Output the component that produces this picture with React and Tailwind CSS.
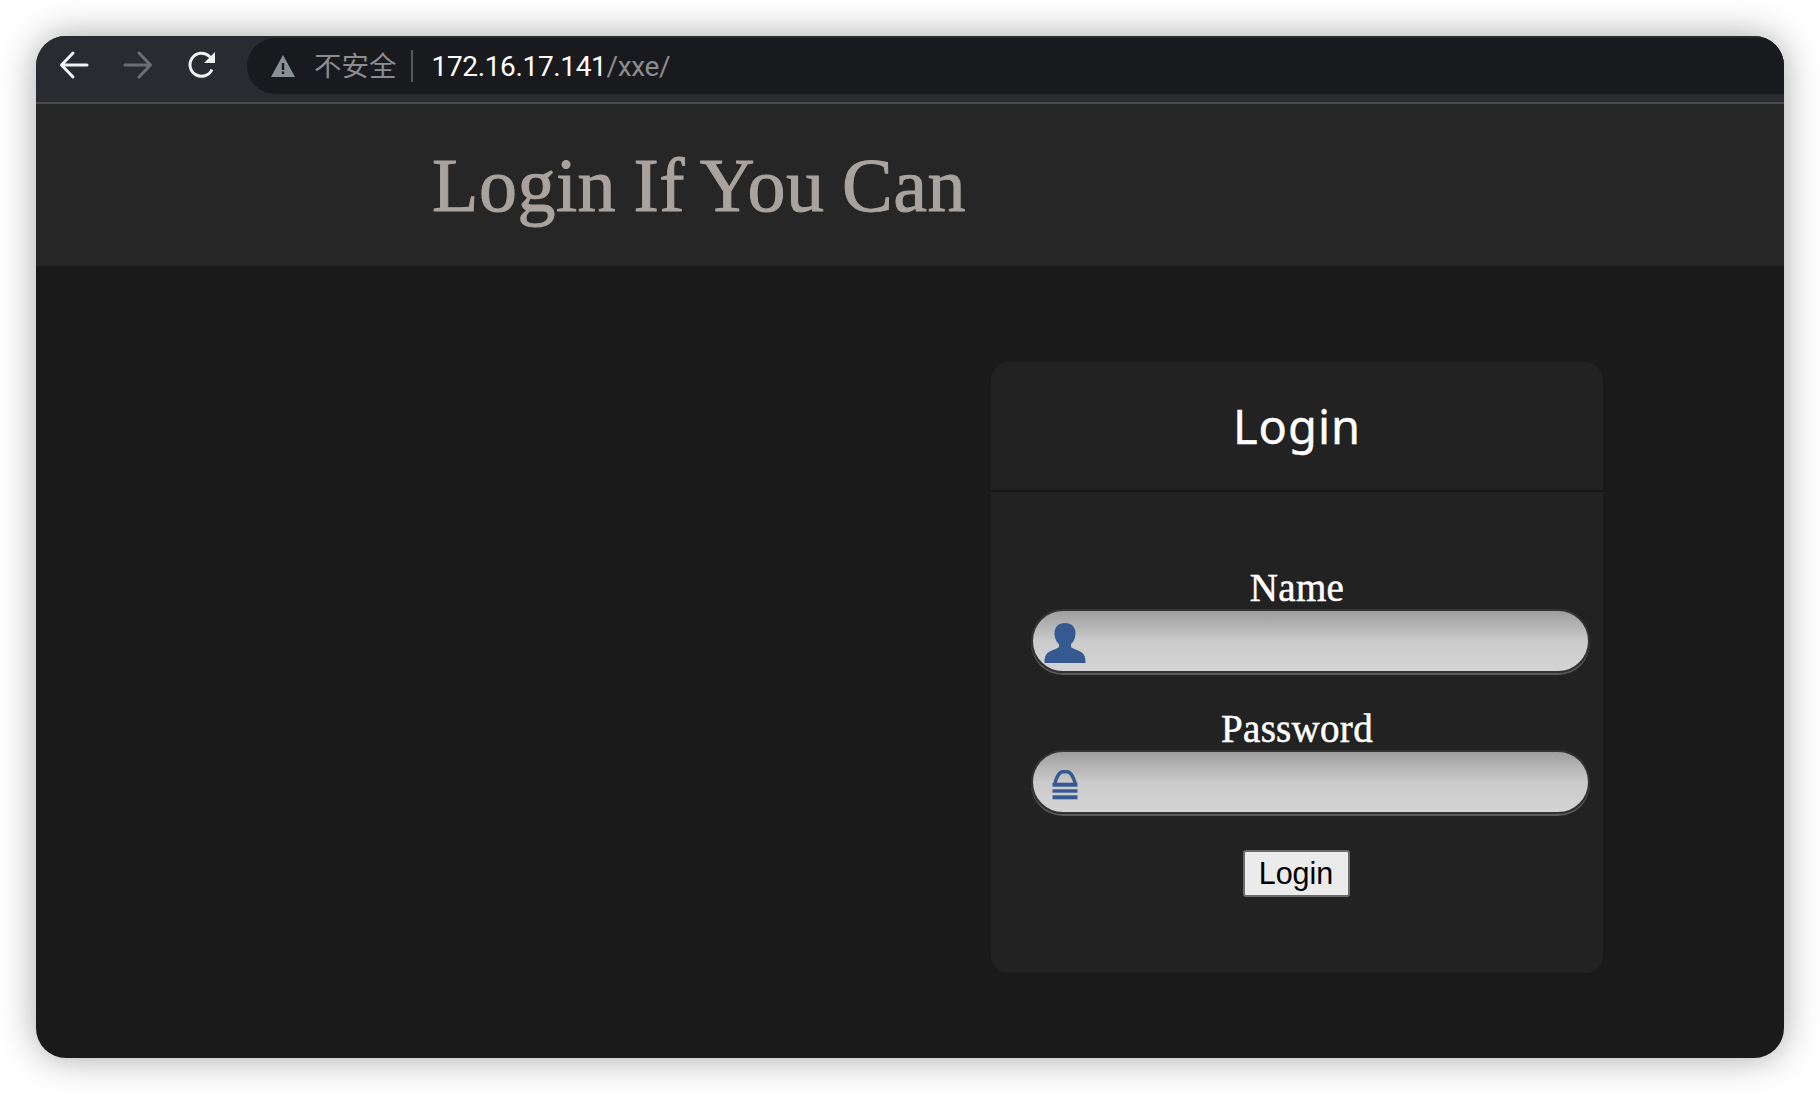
import React from 'react';

const serif = 'font-["Liberation_Serif",serif]';

const UserIcon = () => (
    <svg width="42" height="40" viewBox="0 0 41 40" className="shrink-0 mt-[-1px]">
        <path
            fill="#355a92"
            d="M20.500 0c6.500 0 10.500 4 10.500 10 0 5-2 9-4.500 11v3c2 2 7 3 10 5 3 2 4.500 4 4.500 11H0c0-7 1.500-9 4.500-11 3-2 8-3 10-5v-3C12 19 10 15 10 10 10 4 14 0 20.500 0z"
        />
    </svg>
);

const LockIcon = () => (
    <svg width="26" height="30" viewBox="0 0 25 30" className="shrink-0">
        <path fill="none" stroke="#355a92" strokeWidth="3.500" d="M2.500 13C3.500 8 7 1.800 10 1.800h5c3 0 6.500 6.200 7.500 11.200" />
        <rect x="0" y="12.700" width="25" height="4" fill="#355a92" />
        <rect x="0" y="19.300" width="25" height="3.400" fill="#355a92" />
        <rect x="0" y="25.300" width="25" height="4" fill="#355a92" />
    </svg>
);

const Field = ({ label, icon, first }) => (
    <div className={first ? 'flex flex-col' : 'flex flex-col mt-[35px]'}>
        <label className={`${serif} text-[39px] leading-[42px] text-white text-center tracking-[0.3px] [-webkit-text-stroke:0.5px_white]`}>{label}</label>
        <div className="ml-[15px] w-[559px] h-[64px] rounded-[32px] border-2 border-[#333] shadow-[0_2px_0_#5a5a5a] bg-gradient-to-b from-[#9e9e9e] via-[#cbcbcb] via-50% to-[#d4d4d4] flex items-center">
            <div className="w-[64px] flex justify-center pt-[5px]">{icon}</div>
        </div>
    </div>
);

export default function App() {
    return (
        <div className="min-h-[1094px] bg-white p-[36px] font-['Liberation_Sans',sans-serif]">
            <div className="h-[1022px] rounded-[30px] overflow-hidden bg-[#1a1a1a] shadow-[0_0_36px_rgba(0,0,0,0.35)] flex flex-col">
                <div className="h-[68px] shrink-0 bg-[#2a2b30] border-b-2 border-[#4a4b4d] flex items-start">
                    <div className="flex items-center h-[58px] pl-[22px] gap-[32px] text-white">
                        <svg width="32" height="32" viewBox="0 0 32 32" fill="none" stroke="#f1f1f1" strokeWidth="3" strokeLinecap="round" strokeLinejoin="round">
                            <path d="M29 16H4M15 4 3.500 16 15 28" />
                        </svg>
                        <svg width="32" height="32" viewBox="0 0 32 32" fill="none" stroke="#6d6e71" strokeWidth="3" strokeLinecap="round" strokeLinejoin="round">
                            <path d="M3 16h25M17 4l11.500 12L17 28" />
                        </svg>
                        <svg width="32" height="32" viewBox="0 0 32 32" fill="none">
                            <path d="M26 20.500A11.500 11.500 0 1 1 23.500 7.500L27 11" stroke="#f1f1f1" strokeWidth="3" />
                            <path d="M29 3v11H18z" fill="#f1f1f1" />
                        </svg>
                    </div>
                    <div className="ml-[29px] mt-[2px] flex-1 h-[56px] rounded-l-[28px] bg-[#191a1d] flex items-center pl-[23px]">
                        <svg width="26" height="24" viewBox="0 0 26 24">
                            <path d="M13 1 25 23H1z" fill="#8a9097" />
                            <rect x="11.800" y="9" width="2.400" height="7" fill="#191a1d" />
                            <rect x="11.800" y="17.500" width="2.400" height="2.500" fill="#191a1d" />
                        </svg>
                        <span className="ml-[18px] text-[27.500px] leading-none mt-[-3px] text-[#8a8c8f] font-['Noto_Sans_CJK_SC',sans-serif]">不安全</span>
                        <span className="ml-[14px] w-[2px] h-[32px] bg-[#55575a]" />
                        <span className="ml-[19px] mt-[1px] text-[28px] leading-none text-white font-['Roboto',sans-serif] tracking-[-0.35px]">172.16.17.141<span className="text-[#8a8c8f]">/xxe/</span></span>
                    </div>
                </div>

                <header className="h-[162px] shrink-0 bg-[#262626] pl-[396px] flex items-center">
                    <h1 className={`${serif} text-[76px] leading-none text-[#aaa39d] tracking-[0.5px] [word-spacing:-2px] [-webkit-text-stroke:1px_#aaa39d]`}>Login If You Can</h1>
                </header>

                <main className="flex-1 pl-[955px] pt-[96px]">
                    <section className="w-[612px] h-[611px] rounded-[18px] bg-[#222222]">
                        <div className="h-[130px] border-b-2 border-[#161616] flex items-center justify-center">
                            <h2 className="font-['Noto_Sans',sans-serif] text-[47px] tracking-[1px] text-white [-webkit-text-stroke:0.4px_white]">Login</h2>
                        </div>
                        <div className="px-[25px] pt-[75px] flex flex-col">
                            <Field first label="Name" icon={<UserIcon />} />
                            <Field label="Password" icon={<LockIcon />} />
                            <div className="flex justify-center mt-[36px]">
                                <button className="w-[107px] h-[47px] mr-[2px] bg-[#ebebeb] border-2 border-[#6b6b6b] rounded-[3px] text-[30.500px] leading-none text-black">Login</button>
                            </div>
                        </div>
                    </section>
                </main>
            </div>
        </div>
    );
}
